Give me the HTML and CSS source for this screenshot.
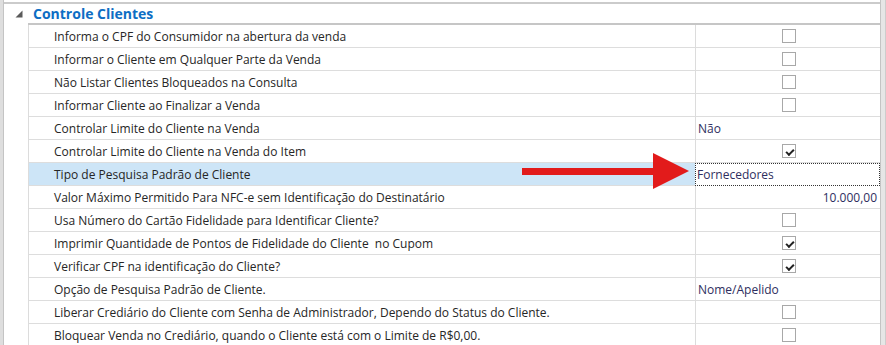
FILE: index.html
```html
<!DOCTYPE html>
<html lang="pt-BR">
<head>
  <meta charset="UTF-8">
  <title>Controle Clientes</title>
  <link rel="stylesheet" href="styles.css">
</head>
<body>
  <div class="panel">
    <div class="edge-left"></div>
    <div class="grid">
      <div class="category">
        <div class="toggle">
          <svg width="8" height="8" viewBox="0 0 8 8"><polygon points="0.5,7.5 7.5,7.5 7.5,0.5" fill="#5a5a5a"/></svg>
        </div>
        <div class="cat-title">Controle Clientes</div>
      </div>

      <div class="row">
        <div class="indent"></div>
        <div class="name">Informa o CPF do Consumidor na abertura da venda</div>
        <div class="value center"><span class="check"></span></div>
      </div>
      <div class="row">
        <div class="indent"></div>
        <div class="name">Informar o Cliente em Qualquer Parte da Venda</div>
        <div class="value center"><span class="check"></span></div>
      </div>
      <div class="row">
        <div class="indent"></div>
        <div class="name">Não Listar Clientes Bloqueados na Consulta</div>
        <div class="value center"><span class="check"></span></div>
      </div>
      <div class="row">
        <div class="indent"></div>
        <div class="name">Informar Cliente ao Finalizar a Venda</div>
        <div class="value center"><span class="check"></span></div>
      </div>
      <div class="row">
        <div class="indent"></div>
        <div class="name">Controlar Limite do Cliente na Venda</div>
        <div class="value">Não</div>
      </div>
      <div class="row">
        <div class="indent"></div>
        <div class="name">Controlar Limite do Cliente na Venda do Item</div>
        <div class="value center"><span class="check checked"></span></div>
      </div>
      <div class="row selected">
        <div class="indent"></div>
        <div class="name">Tipo de Pesquisa Padrão de Cliente</div>
        <div class="value focus">Fornecedores</div>
      </div>
      <div class="row">
        <div class="indent"></div>
        <div class="name">Valor Máximo Permitido Para NFC-e sem Identificação do Destinatário</div>
        <div class="value right">10.000,00</div>
      </div>
      <div class="row">
        <div class="indent"></div>
        <div class="name">Usa Número do Cartão Fidelidade para Identificar Cliente?</div>
        <div class="value center"><span class="check"></span></div>
      </div>
      <div class="row">
        <div class="indent"></div>
        <div class="name">Imprimir Quantidade de Pontos de Fidelidade do Cliente &nbsp;no Cupom</div>
        <div class="value center"><span class="check checked"></span></div>
      </div>
      <div class="row">
        <div class="indent"></div>
        <div class="name">Verificar CPF na identificação do Cliente?</div>
        <div class="value center"><span class="check checked"></span></div>
      </div>
      <div class="row">
        <div class="indent"></div>
        <div class="name">Opção de Pesquisa Padrão de Cliente.</div>
        <div class="value">Nome/Apelido</div>
      </div>
      <div class="row">
        <div class="indent"></div>
        <div class="name">Liberar Crediário do Cliente com Senha de Administrador, Dependo do Status do Cliente.</div>
        <div class="value center"><span class="check"></span></div>
      </div>
      <div class="row">
        <div class="indent"></div>
        <div class="name">Bloquear Venda no Crediário, quando o Cliente está com o Limite de R$0,00.</div>
        <div class="value center"><span class="check"></span></div>
      </div>
    </div>
    <div class="edge-right"></div>

    <!-- seta vermelha apontando para o campo -->
    <svg class="arrow" width="886" height="345" viewBox="0 0 886 345">
      <rect x="522" y="168" width="133" height="7" fill="#e21b1b"/>
      <polygon points="653,153 689,171 653,189" fill="#e21b1b"/>
    </svg>
  </div>
</body>
</html>
```

FILE: styles.css
```css
* {
  box-sizing: border-box;
}
body {
  margin: 0;
  background: #fff;
  font-family: 'Open Sans', 'Noto Sans', sans-serif;
  font-size: 12px;
  color: #262626;
  overflow: hidden;
}
.panel {
  position: relative;
  display: flex;
  width: 886px;
  height: 345px;
  overflow: hidden;
}
.edge-left {
  width: 4px;
  background: #dedede;
  border-right: 1px solid #c4c4c4;
}
.edge-right {
  width: 6px;
  background: #e6e6e6;
  border-left: 1px solid #c4c4c4;
  border-right: 1px solid #cdcdcd;
}
.grid {
  width: 876px;
  padding-top: 2px;
}
.category {
  display: grid;
  grid-template-columns: 24px 1fr;
  height: 23px;
  border-top: 2px solid #cbcbcb;
}
.toggle {
  padding: 6px 0 0 11px;
}
.toggle svg {
  display: block;
}
.cat-title {
  padding-left: 5px;
  font-weight: bold;
  font-size: 14px;
  line-height: 19px;
  color: #0d6ec4;
  border-bottom: 2px solid #c6c6c6;
}
.row {
  display: grid;
  grid-template-columns: 24px 667px 185px;
  height: 23px;
}
.name,
.value {
  border-bottom: 1px solid #dddddd;
  border-left: 1px solid #dcdcdc;
  padding-top: 1px;
  line-height: 21px;
  white-space: nowrap;
  overflow: hidden;
}
.name {
  padding-left: 25px;
}
.value {
  padding-left: 2px;
  color: #2e2e5e;
}
.value.center {
  display: flex;
  align-items: center;
  justify-content: center;
  padding-top: 0;
}
.value.right {
  text-align: right;
  padding-right: 3px;
}
.selected .name {
  background: #cde5f7;
}
.value.focus {
  border: 1px dotted #333;
  padding-top: 0;
  line-height: 21px;
  padding-left: 1px;
}
.check {
  position: relative;
  display: block;
  width: 14px;
  height: 14px;
  border: 1px solid #a8a8a8;
  background: #fff;
}
.check.checked::after {
  content: "";
  position: absolute;
  left: 3px;
  top: 1px;
  width: 6px;
  height: 3px;
  border-left: 2px solid #222;
  border-bottom: 2px solid #222;
  transform: translate(0, 3px) rotate(-45deg);
}
.arrow {
  position: absolute;
  left: 0;
  top: 0;
  pointer-events: none;
}
```
